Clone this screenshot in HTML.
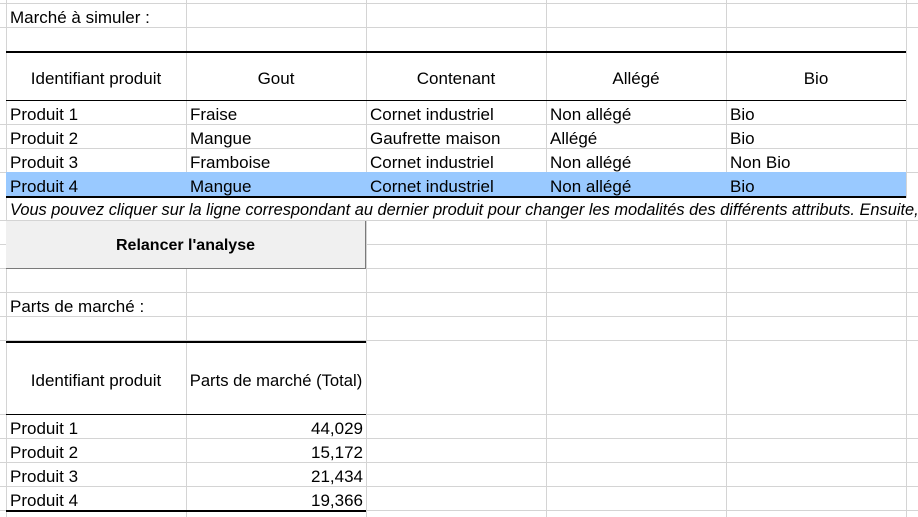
<!DOCTYPE html>
<html><head><meta charset="utf-8"><style>
html,body{margin:0;padding:0;background:#fff;}
body{width:918px;height:517px;overflow:hidden;position:relative;font-family:"Liberation Sans",sans-serif;font-size:17px;color:#000;}
.h{position:absolute;left:0;width:918px;height:1px;background:#d4d4d4;}
.v{position:absolute;top:0;height:517px;width:1px;background:#d4d4d4;}
.b{position:absolute;background:#000;}
.t{position:absolute;white-space:nowrap;line-height:24px;height:24px;margin-top:2px;}
.c{text-align:center;}
.r{text-align:right;}
</style></head><body>
<div class="h" style="top:3px"></div>
<div class="h" style="top:27px"></div>
<div class="h" style="top:124px"></div>
<div class="h" style="top:148px"></div>
<div class="h" style="top:172px"></div>
<div class="h" style="top:220px"></div>
<div class="h" style="top:244px"></div>
<div class="h" style="top:268px"></div>
<div class="h" style="top:292px"></div>
<div class="h" style="top:316px"></div>
<div class="h" style="top:340px"></div>
<div class="h" style="top:414px"></div>
<div class="h" style="top:438px"></div>
<div class="h" style="top:462px"></div>
<div class="h" style="top:486px"></div>
<div class="h" style="top:510px"></div>
<div class="v" style="left:6px"></div>
<div class="v" style="left:186px"></div>
<div class="v" style="left:366px"></div>
<div class="v" style="left:546px"></div>
<div class="v" style="left:726px"></div>
<div class="v" style="left:906px"></div>

<div style="position:absolute;left:6px;top:172px;width:900px;height:24px;background:#99c9ff;"></div>
<div style="position:absolute;left:7px;top:198px;width:911px;height:22px;background:#fff;"></div>

<div class="b" style="left:6px;top:51px;width:900px;height:2px"></div>
<div class="b" style="left:6px;top:100px;width:900px;height:1px"></div>
<div class="b" style="left:6px;top:196px;width:900px;height:2px"></div>
<div class="b" style="left:6px;top:341px;width:360px;height:2px"></div>
<div class="b" style="left:6px;top:414px;width:360px;height:1px"></div>
<div class="b" style="left:6px;top:510px;width:360px;height:2px"></div>

<div class="t" style="left:10px;top:4px">Marché à simuler :</div>

<div class="t c" style="left:6px;top:65px;width:180px">Identifiant produit</div>
<div class="t c" style="left:186px;top:65px;width:180px">Gout</div>
<div class="t c" style="left:366px;top:65px;width:180px">Contenant</div>
<div class="t c" style="left:546px;top:65px;width:180px">Allégé</div>
<div class="t c" style="left:726px;top:65px;width:180px">Bio</div>

<div class="t" style="left:10px;top:101px">Produit 1</div>
<div class="t" style="left:190px;top:101px">Fraise</div>
<div class="t" style="left:370px;top:101px">Cornet industriel</div>
<div class="t" style="left:550px;top:101px">Non allégé</div>
<div class="t" style="left:730px;top:101px">Bio</div>

<div class="t" style="left:10px;top:125px">Produit 2</div>
<div class="t" style="left:190px;top:125px">Mangue</div>
<div class="t" style="left:370px;top:125px">Gaufrette maison</div>
<div class="t" style="left:550px;top:125px">Allégé</div>
<div class="t" style="left:730px;top:125px">Bio</div>

<div class="t" style="left:10px;top:149px">Produit 3</div>
<div class="t" style="left:190px;top:149px">Framboise</div>
<div class="t" style="left:370px;top:149px">Cornet industriel</div>
<div class="t" style="left:550px;top:149px">Non allégé</div>
<div class="t" style="left:730px;top:149px">Non Bio</div>

<div class="t" style="left:10px;top:173px">Produit 4</div>
<div class="t" style="left:190px;top:173px">Mangue</div>
<div class="t" style="left:370px;top:173px">Cornet industriel</div>
<div class="t" style="left:550px;top:173px">Non allégé</div>
<div class="t" style="left:730px;top:173px">Bio</div>

<div class="t" style="left:10px;top:196px;font-style:italic;font-size:16.4px;width:908px;overflow:hidden">Vous pouvez cliquer sur la ligne correspondant au dernier produit pour changer les modalités des différents attributs. Ensuite, exécutez</div>

<div style="position:absolute;left:6px;top:221px;width:359px;height:47px;background:#f0f0f0;border-right:1px solid #7a7a7a;border-bottom:1px solid #7a7a7a;font-weight:bold;font-size:16px;text-align:center;line-height:49px;">Relancer l'analyse</div>

<div class="t" style="left:10px;top:293px">Parts de marché :</div>

<div class="t c" style="left:6px;top:367px;width:180px">Identifiant produit</div>
<div class="t c" style="left:186px;top:367px;width:180px;font-size:16.6px">Parts de marché (Total)</div>

<div class="t" style="left:10px;top:415px">Produit 1</div>
<div class="t r" style="left:186px;top:415px;width:177px">44,029</div>
<div class="t" style="left:10px;top:439px">Produit 2</div>
<div class="t r" style="left:186px;top:439px;width:177px">15,172</div>
<div class="t" style="left:10px;top:463px">Produit 3</div>
<div class="t r" style="left:186px;top:463px;width:177px">21,434</div>
<div class="t" style="left:10px;top:487px">Produit 4</div>
<div class="t r" style="left:186px;top:487px;width:177px">19,366</div>
</body></html>
